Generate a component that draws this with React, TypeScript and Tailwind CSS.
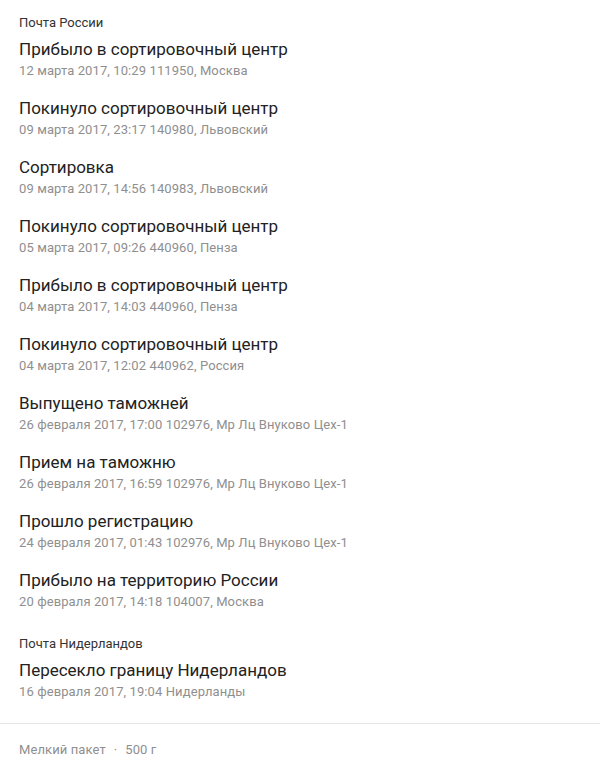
import React from "react";

type Event = { title: string; meta: string };

const russia: Event[] = [
  { title: "Прибыло в сортировочный центр", meta: "12 марта 2017, 10:29 111950, Москва" },
  { title: "Покинуло сортировочный центр", meta: "09 марта 2017, 23:17 140980, Львовский" },
  { title: "Сортировка", meta: "09 марта 2017, 14:56 140983, Львовский" },
  { title: "Покинуло сортировочный центр", meta: "05 марта 2017, 09:26 440960, Пенза" },
  { title: "Прибыло в сортировочный центр", meta: "04 марта 2017, 14:03 440960, Пенза" },
  { title: "Покинуло сортировочный центр", meta: "04 марта 2017, 12:02 440962, Россия" },
  { title: "Выпущено таможней", meta: "26 февраля 2017, 17:00 102976, Мр Лц Внуково Цех-1" },
  { title: "Прием на таможню", meta: "26 февраля 2017, 16:59 102976, Мр Лц Внуково Цех-1" },
  { title: "Прошло регистрацию", meta: "24 февраля 2017, 01:43 102976, Мр Лц Внуково Цех-1" },
  { title: "Прибыло на территорию России", meta: "20 февраля 2017, 14:18 104007, Москва" },
];

const netherlands: Event[] = [
  { title: "Пересекло границу Нидерландов", meta: "16 февраля 2017, 19:04 Нидерланды" },
];

const EventRow = ({ ev }: { ev: Event }) => (
  <div className="pb-[17px] last:pb-0">
    <p className="text-[17px] leading-[22px] text-[#222222]">{ev.title}</p>
    <p className="mt-[2px] text-[13px] leading-[18px] tracking-[0.1px] text-[#8f8f8f]">{ev.meta}</p>
  </div>
);

const Group = ({ name, events }: { name: string; events: Event[] }) => (
  <div>
    <h4 className="text-[13px] leading-[18px] text-[#333333]">{name}</h4>
    <div className="mt-[6px]">
      {events.map((ev, i) => (
        <EventRow key={i} ev={ev} />
      ))}
    </div>
  </div>
);

export default function App() {
  return (
    <div
      className="w-[600px] h-[772px] bg-white overflow-hidden"
      style={{ fontFamily: "Roboto, 'Noto Sans', sans-serif" }}
    >
      <div className="px-[19px] pt-[14px] flex flex-col gap-[24px]">
        <Group name="Почта России" events={russia} />
        <Group name="Почта Нидерландов" events={netherlands} />
      </div>
      <div className="mt-[22px] border-t border-[#e6e6e6] px-[19px] pt-[17px]">
        <p className="text-[13px] leading-[18px] tracking-[0.1px] text-[#8f8f8f] flex items-center gap-[8px]">
          <span>Мелкий пакет</span>
          <span>·</span>
          <span>500 г</span>
        </p>
      </div>
    </div>
  );
}
